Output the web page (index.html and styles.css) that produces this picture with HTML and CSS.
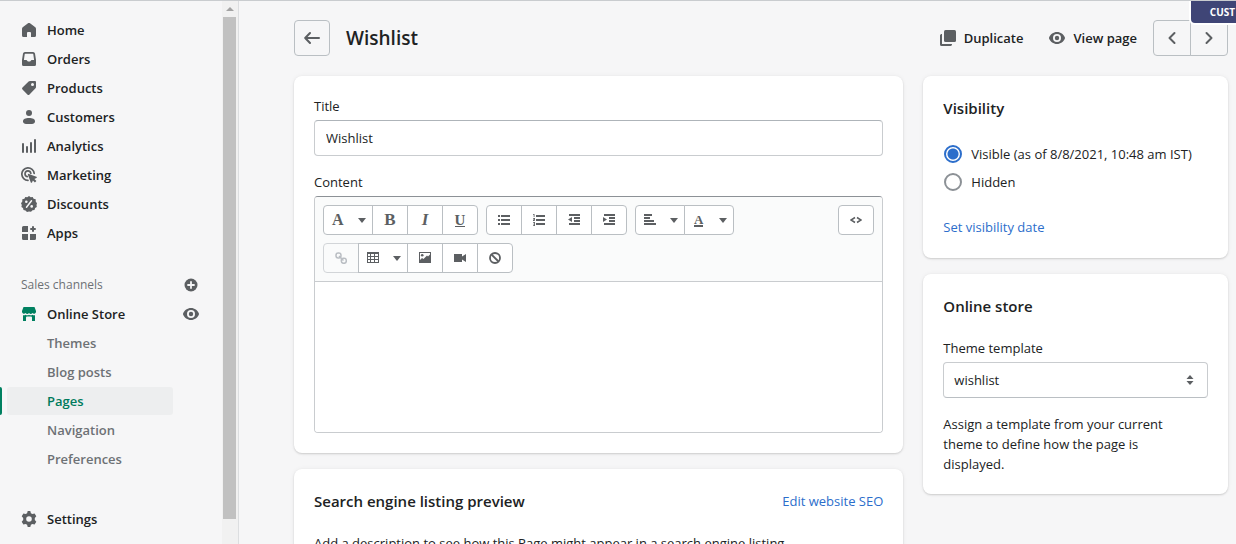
FILE: index.html
```html
<!DOCTYPE html>
<html lang="en">
<head>
<meta charset="utf-8">
<meta name="viewport" content="width=device-width, initial-scale=1">
<title>Wishlist</title>
<link rel="stylesheet" href="styles.css">
</head>
<body>
<div class="app">
  <aside class="sidebar">
    <nav class="nav">
      <a class="nav-item" href="#"><svg class="icon" viewBox="0 0 16 16"><path d="M8 1c.4 0 .7.1 1 .3l5 3.700c.6.5 1 1 1 1.800v6.700a1.500 1.500 0 0 1-1.500 1.500H10v-4a1 1 0 0 0-1-1H7a1 1 0 0 0-1 1v4H2.500A1.500 1.500 0 0 1 1 13.500V6.800C1 6 1.400 5.500 2 5l5-3.700c.3-.2.6-.3 1-.3z"/></svg>Home</a>
      <a class="nav-item" href="#"><svg class="icon" viewBox="0 0 16 16"><path fill-rule="evenodd" d="M4 1h8a2 2 0 0 1 2 1.600l1 6.400v4.500a1.500 1.500 0 0 1-1.500 1.500h-11A1.500 1.500 0 0 1 1 13.500V9l1-6.400A2 2 0 0 1 4 1zm.3 1.800a.6.6 0 0 0-.6.500L2.900 9h2.300c.6 0 .8.4 1 .800.200.500.500.700 1 .700h1.600c.5 0 .8-.2 1-.7.200-.4.400-.8 1-.8h2.300l-.8-5.700a.6.6 0 0 0-.6-.5z"/></svg>Orders</a>
      <a class="nav-item" href="#"><svg class="icon" viewBox="0 0 16 16"><path fill-rule="evenodd" d="M9 1h5a1 1 0 0 1 1 1v5c0 .5-.2 1-.5 1.300l-6 6.200a1.500 1.500 0 0 1-2.100 0L1.500 9.600a1.500 1.500 0 0 1 0-2.100l6.100-6C8 1.200 8.500 1 9 1zm2.500 5a1.500 1.500 0 1 0 0-3 1.500 1.500 0 0 0 0 3z"/></svg>Products</a>
      <a class="nav-item" href="#"><svg class="icon" viewBox="0 0 16 16"><circle cx="8" cy="4" r="3"/><path d="M2 12.200C2 10 4.500 9 8 9s6 1 6 3.200C14 14 12.500 15 11 15H5c-1.500 0-3-1-3-2.800z"/></svg>Customers</a>
      <a class="nav-item" href="#"><svg class="icon" viewBox="0 0 16 16"><rect x="1" y="5" width="2" height="10" rx="1"/><rect x="5" y="8" width="2" height="7" rx="1"/><rect x="9" y="4" width="2" height="11" rx="1"/><rect x="13" y="1" width="2" height="14" rx="1"/></svg>Analytics</a>
      <a class="nav-item" href="#"><svg class="icon" viewBox="0 0 16 16"><path fill="none" stroke="currentColor" stroke-width="1.700" stroke-linecap="round" d="M7 13.300A6.200 6.200 0 1 1 13.200 6.500M6.300 9.600A2.900 2.900 0 1 1 9.800 6.300"/><path d="M7.200 6.700l8.200 3c.7.300.7 1 0 1.300l-2 .9 2 2-1.500 1.500-2-2-.9 2c-.3.600-1 .6-1.200 0l-3-8z"/></svg>Marketing</a>
      <a class="nav-item" href="#"><svg class="icon" viewBox="0 0 16 16"><path d="M8 0l1.700 1.200 2-.3.900 1.900 2.100.5v2.200L16 7.200 15.500 9l.3 2-1.700 1.100-.6 2-2 .2L10 15.700 8 15.400l-2 .5-1.500-1.500-2-.3-.5-2L.4 10.900.8 9 0 7.200l1.300-1.700V3.300l2.100-.5.900-1.900 2 .3z"/><path stroke="#f6f6f7" stroke-width="1.500" stroke-linecap="round" d="M5.500 11.200l5-6.400"/><circle fill="#f6f6f7" cx="5.300" cy="5.700" r="1.300"/><circle fill="#f6f6f7" cx="10.700" cy="10.400" r="1.300"/></svg>Discounts</a>
      <a class="nav-item" href="#"><svg class="icon" viewBox="0 0 16 16"><path d="M2.500 1H7v6H1V2.500A1.500 1.500 0 0 1 2.500 1zM1 9h6v6H2.500A1.500 1.500 0 0 1 1 13.500zM9 9h6v4.500a1.500 1.500 0 0 1-1.500 1.500H9z"/><path stroke="currentColor" stroke-width="2" stroke-linecap="round" d="M12 2v4M10 4h4"/></svg>Apps</a>
    </nav>
    <div class="channels">
      <div class="nav-row">
        <h2 class="nav-heading">Sales channels</h2>
        <button class="nav-action" type="button" aria-label="Add sales channel"><svg class="icon" viewBox="0 0 16 16"><circle cx="8" cy="8" r="6.500"/><path stroke="#f6f6f7" stroke-width="1.800" stroke-linecap="round" d="M8 5v6M5 8h6"/></svg></button>
      </div>
      <div class="nav-row">
        <a class="nav-item" href="#"><svg class="icon icon-green" viewBox="0 0 16 16"><path d="M2.500 1h11L15 5v1a2 2 0 0 1-3.500 1 2.300 2.300 0 0 1-3.500 0 2.300 2.300 0 0 1-3.500 0A2 2 0 0 1 1 6V5z"/><path d="M2 9.200c1 .2 1.800 0 2.500-.5 1 .7 2.500.7 3.500 0 1 .7 2.500.7 3.500 0 .7.500 1.500.7 2.500.5V15h-3v-3.500a1 1 0 0 0-1-1H6a1 1 0 0 0-1 1V15H2z"/></svg>Online Store</a>
        <button class="nav-action" type="button" aria-label="View your online store"><svg class="icon" viewBox="0 0 16 16"><path fill-rule="evenodd" d="M8 2c3.700 0 6.500 2.300 7.900 5.500.1.300.1.700 0 1C14.500 11.700 11.700 14 8 14S1.500 11.700.1 8.500a1.200 1.200 0 0 1 0-1C1.500 4.300 4.300 2 8 2zm0 2a4 4 0 1 0 0 8 4 4 0 0 0 0-8z"/><circle cx="8" cy="8" r="2.200"/></svg></button>
      </div>
      <a class="sub-item" href="#">Themes</a>
      <a class="sub-item" href="#">Blog posts</a>
      <a class="sub-item sub-item-active" href="#" aria-current="page">Pages</a>
      <a class="sub-item" href="#">Navigation</a>
      <a class="sub-item" href="#">Preferences</a>
    </div>
    <a class="nav-item nav-settings" href="#"><svg class="icon" viewBox="0 0 16 16"><path fill-rule="evenodd" d="M6.700 0h2.600l.6 2.300 1.500.8 2.200-.7 1.700 2.800L13.800 7v2l1.500 1.700-1.700 2.900-2.200-.7-1.500.8-.6 2.300H6.700l-.6-2.300-1.500-.8-2.200.7-1.700-2.900L2.200 9V7L.7 5.200l1.700-2.800 2.200.7 1.500-.8zM8 5.200a2.800 2.800 0 1 0 0 5.600 2.800 2.800 0 0 0 0-5.600z"/></svg>Settings</a>
  </aside>
  <div class="scrollbar" aria-hidden="true">
    <span class="scroll-arrow"></span>
    <span class="scroll-thumb"></span>
  </div>

  <main class="main">
    <span class="badge">CUST</span>
    <header class="page-header">
      <a class="square-button" href="#" aria-label="Back to pages"><svg class="icon" viewBox="0 0 16 16"><path class="stroke" d="M15 8H1.500M6 3L1.200 8 6 13"/></svg></a>
      <h1 class="page-title">Wishlist</h1>
      <div class="page-actions">
        <button class="plain-button" type="button"><svg class="icon" viewBox="0 0 16 16"><rect x="4" width="12" height="12" rx="1.500"/><path d="M0 5.500C0 4.500 1 4 2 4v10h10c0 1-.5 2-1.500 2h-9A1.500 1.500 0 0 1 0 14.500z"/></svg>Duplicate</button>
        <button class="plain-button" type="button"><svg class="icon" viewBox="0 0 16 16"><path fill-rule="evenodd" d="M8 2c3.700 0 6.500 2.300 7.900 5.500.1.300.1.700 0 1C14.500 11.700 11.700 14 8 14S1.500 11.700.1 8.500a1.200 1.200 0 0 1 0-1C1.500 4.300 4.300 2 8 2zm0 2a4 4 0 1 0 0 8 4 4 0 0 0 0-8z"/><circle cx="8" cy="8" r="2.200"/></svg>View page</button>
      </div>
      <div class="pager">
        <button class="pager-button" type="button" aria-label="Previous"><svg class="icon" viewBox="0 0 16 16"><path class="stroke" d="M10.500 3l-5 5 5 5"/></svg></button>
        <button class="pager-button" type="button" aria-label="Next"><svg class="icon" viewBox="0 0 16 16"><path class="stroke" d="M5.500 3l5 5-5 5"/></svg></button>
      </div>
    </header>

    <div class="columns">
      <div class="column">
        <section class="card">
          <div class="field">
            <label for="title">Title</label>
            <input class="control" id="title" type="text" value="Wishlist">
          </div>
          <div class="field">
            <label for="content">Content</label>
            <div class="editor">
              <div class="toolbar">
                <div class="tool-groups">
                  <div class="tool-group">
                    <button class="tool tool-wide" type="button" aria-label="Formatting"><span class="glyph glyph-small">A</span><span class="caret"></span></button>
                    <button class="tool" type="button" aria-label="Bold"><span class="glyph">B</span></button>
                    <button class="tool" type="button" aria-label="Italic"><span class="glyph glyph-italic">I</span></button>
                    <button class="tool" type="button" aria-label="Underline"><span class="glyph glyph-underline">U</span></button>
                  </div>
                  <div class="tool-group">
                    <button class="tool" type="button" aria-label="Bulleted list"><svg class="tool-icon" viewBox="0 0 12 12"><path d="M0 1h2v2H0zM3 1h9v2H3zM0 5h2v2H0zM3 5h9v2H3zM0 9h2v2H0zM3 9h9v2H3z"/></svg></button>
                    <button class="tool" type="button" aria-label="Numbered list"><svg class="tool-icon" viewBox="0 0 12 12"><path d="M3 1h9v2H3zM3 5h9v2H3zM3 9h9v2H3zM0 0h1.500v3H.7V.8H0zM0 4h2v1.500L1 6.300h1V7H0v-.9l1.200-1.300H0zM0 8h2v4H0v-.8h1.200v-.8H.3v-.7h.9v-.9H0z"/></svg></button>
                    <button class="tool" type="button" aria-label="Outdent"><svg class="tool-icon" viewBox="0 0 12 12"><path d="M1 0h11v2H1zM6 3h6v2H6zM6 6h6v2H6zM1 9h11v2H1zM0 5.500L4 3v5z"/></svg></button>
                    <button class="tool" type="button" aria-label="Indent"><svg class="tool-icon" viewBox="0 0 12 12"><path d="M1 0h11v2H1zM6 3h6v2H6zM6 6h6v2H6zM1 9h11v2H1zM4 5.500L0 3v5z"/></svg></button>
                  </div>
                  <div class="tool-group">
                    <button class="tool tool-wide" type="button" aria-label="Alignment"><svg class="tool-icon" viewBox="0 0 12 12"><path d="M0 0h8v2H0zM0 3h6v2H0zM0 6h10v2H0zM0 9h12v2H0z"/></svg><span class="caret"></span></button>
                    <button class="tool tool-wide" type="button" aria-label="Color"><span class="glyph glyph-color">A</span><span class="caret"></span></button>
                  </div>
                  <div class="tool-group">
                    <button class="tool" type="button" aria-label="Insert link" disabled><svg class="tool-icon" viewBox="0 0 12 12"><g fill="none" stroke="currentColor" stroke-width="1.500"><rect x="1" y="1" width="5" height="5" rx="2.200"/><rect x="6.300" y="6.300" width="5" height="5" rx="2.200"/><path d="M4 4l4.500 4.500"/></g></svg></button>
                    <button class="tool tool-wide" type="button" aria-label="Insert table"><svg class="tool-icon" viewBox="0 0 12 12"><path fill-rule="evenodd" d="M0 0h12v11H0zM1 2v2h2V2zm3 0v2h3V2zm4 0v2h3V2zM1 5v2h2V5zm3 0v2h3V5zm4 0v2h3V5zM1 8v2h2V8zm3 0v2h3V8zm4 0v2h3V8z"/></svg><span class="caret"></span></button>
                    <button class="tool" type="button" aria-label="Insert image"><svg class="tool-icon" viewBox="0 0 12 12"><path fill-rule="evenodd" d="M0 0h12v11H0zM1 1v7l2-2 1.500 1L8 3.500l1 1 2-2V1z"/><circle cx="3.200" cy="3.300" r="1.300"/></svg></button>
                    <button class="tool" type="button" aria-label="Insert video"><svg class="tool-icon" viewBox="0 0 12 12"><path d="M0 2h8v2.500L12 2v8L8 7.500V10H0z"/></svg></button>
                    <button class="tool" type="button" aria-label="Clear formatting"><svg class="tool-icon" viewBox="0 0 12 12"><g fill="none" stroke="currentColor" stroke-width="1.800"><circle cx="6" cy="6" r="5"/><path d="M2.500 2.500l7 7"/></g></svg></button>
                  </div>
                </div>
                <button class="tool" type="button" aria-label="Show HTML"><svg class="tool-icon" viewBox="0 0 12 12"><path fill="none" stroke="currentColor" stroke-width="1.500" d="M5 3.500L1 6l4 2.500M7 3.500L11 6 7 8.500"/></svg></button>
              </div>
              <textarea class="editor-body" id="content"></textarea>
            </div>
          </div>
        </section>
        <section class="card card-seo">
          <div class="card-head">
            <h2 class="card-title">Search engine listing preview</h2>
            <a class="link" href="#">Edit website SEO</a>
          </div>
          <p class="text">Add a description to see how this Page might appear in a search engine listing</p>
        </section>
      </div>

      <div class="column">
        <section class="card card-visibility">
          <h2 class="card-title">Visibility</h2>
          <div class="choices">
            <label class="choice"><input class="radio" type="radio" name="visibility" checked>Visible (as of 8/8/2021, 10:48 am IST)</label>
            <label class="choice"><input class="radio" type="radio" name="visibility">Hidden</label>
          </div>
          <a class="link" href="#">Set visibility date</a>
        </section>
        <section class="card card-template">
          <h2 class="card-title">Online store</h2>
          <div class="field">
            <label for="template">Theme template</label>
            <div class="select-wrap">
              <select class="control" id="template"><option>wishlist</option></select>
              <svg class="select-icon" viewBox="0 0 8 10" aria-hidden="true"><path d="M4 0l3.500 4h-7zM4 10L.5 6h7z"/></svg>
            </div>
          </div>
          <p class="text">Assign a template from your current theme to define how the page is displayed.</p>
        </section>
      </div>
    </div>
  </main>
</div>
</body>
</html>
```
FILE: styles.css
```css
* {
  box-sizing: border-box;
}

body {
  margin: 0;
  background: #f6f6f7;
  color: #202223;
  font: 400 13px/20px "Open Sans", "Noto Sans", sans-serif;
}

h1, h2, p {
  margin: 0;
}

a {
  color: inherit;
  text-decoration: none;
}

button, input, select, textarea {
  margin: 0;
  font: inherit;
  color: inherit;
}

button {
  padding: 0;
  border: 0;
  background: none;
  cursor: pointer;
}

.app {
  display: grid;
  grid-template-columns: 222px 17px minmax(0, 1fr);
  height: 100vh;
  border-top: 1px solid #c9cccf;
  overflow: hidden;
}

.icon {
  flex: none;
  display: block;
  width: 16px;
  height: 16px;
  color: #5c5f62;
  fill: currentColor;
}

.icon-green {
  color: #008060;
}

.stroke {
  fill: none;
  stroke: currentColor;
  stroke-width: 2;
  stroke-linecap: round;
  stroke-linejoin: round;
}

/* Sidebar */

.sidebar {
  display: flex;
  flex-direction: column;
  gap: 24px;
  padding: 15px 0 11px;
}

.nav, .channels {
  display: flex;
  flex-direction: column;
  gap: 1px;
}

.nav-item {
  display: flex;
  align-items: center;
  gap: 10px;
  height: 28px;
  padding-left: 21px;
  font-weight: 600;
}

.nav-row {
  display: flex;
  align-items: center;
  justify-content: space-between;
  height: 28px;
  padding-right: 23px;
}

.nav-heading {
  padding-left: 21px;
  color: #6d7175;
  font-size: 12px;
  font-weight: 400;
}

.sub-item {
  height: 28px;
  margin: 0 49px 0 7px;
  padding-left: 40px;
  border-radius: 3px;
  color: #6d7175;
  font-weight: 600;
  line-height: 28px;
}

.sub-item-active {
  position: relative;
  background: #edeeef;
  color: #007b5c;
}

.sub-item-active::before {
  content: "";
  position: absolute;
  top: 0;
  bottom: 0;
  left: -7px;
  width: 2px;
  border-radius: 0 3px 3px 0;
  background: #008060;
}

.nav-settings {
  margin-top: auto;
}

.scrollbar {
  display: flex;
  flex-direction: column;
  align-items: center;
  gap: 6px;
  padding: 6px 1px 25px 0;
  border-right: 1px solid #dcdee0;
  background: #f1f1f1;
}

.scroll-arrow {
  border: 4px solid transparent;
  border-top-width: 0;
  border-bottom-color: #a3a3a3;
}

.scroll-thumb {
  flex: 1;
  width: 13px;
  background: #c1c1c1;
}

/* Page */

.main {
  position: relative;
  padding: 19px 8px 0 55px;
  overflow: hidden;
}

.badge {
  position: absolute;
  top: 0;
  right: 0;
  padding: 0 1px 0 19px;
  border-bottom-left-radius: 4px;
  background: #3f4576;
  box-shadow: 0 0 0 2px #ffffff;
  color: #ffffff;
  font-size: 10px;
  font-weight: 700;
  line-height: 22px;
}

.page-header {
  display: flex;
  align-items: center;
  gap: 16px;
  margin-bottom: 20px;
}

.square-button {
  display: grid;
  place-items: center;
  width: 36px;
  height: 36px;
  border: 1px solid #babfc3;
  border-radius: 4px;
}

.page-title {
  flex: 1;
  font-size: 19px;
  font-weight: 600;
  line-height: 28px;
}

.page-actions {
  display: flex;
  gap: 26px;
}

.plain-button {
  display: flex;
  align-items: center;
  gap: 8px;
  font-weight: 600;
}

.pager {
  display: flex;
}

.pager-button {
  display: grid;
  place-items: center;
  width: 38px;
  height: 36px;
  border: 1px solid #babfc3;
  border-radius: 4px 0 0 4px;
}

.pager-button + .pager-button {
  margin-left: -1px;
  border-radius: 0 4px 4px 0;
}

.columns {
  display: grid;
  grid-template-columns: minmax(0, 2fr) minmax(0, 1fr);
  align-items: start;
  gap: 20px;
}

.column {
  display: flex;
  flex-direction: column;
  gap: 16px;
}

.card {
  display: flex;
  flex-direction: column;
  gap: 16px;
  padding: 20px;
  border-radius: 8px;
  background: #ffffff;
  box-shadow: 0 0 5px rgba(23, 24, 24, 0.05), 0 1px 2px rgba(0, 0, 0, 0.15);
}

.card-head {
  display: flex;
  align-items: center;
  justify-content: space-between;
}

.card-title {
  font-size: 15px;
  font-weight: 600;
  line-height: 24px;
}

.card-seo, .card-template .card-title {
  gap: 20px;
}

.card-template .card-title {
  margin-bottom: 4px;
}

.card-template .text {
  padding-right: 8px;
}

.link {
  align-self: flex-start;
  color: #2c6ecb;
}

.card-head .link {
  align-self: center;
}

.field {
  display: flex;
  flex-direction: column;
  gap: 4px;
}

.control {
  width: 100%;
  height: 36px;
  padding: 0 11px;
  border: 1px solid #c9cccf;
  border-top-color: #aeb4b9;
  border-radius: 4px;
  background: #ffffff;
}

.select-wrap {
  position: relative;
}

select.control {
  display: block;
  appearance: none;
  padding: 0 10px;
  border-color: #c9cccf;
  border-bottom-color: #babfc3;
}

.select-icon {
  position: absolute;
  top: 13px;
  right: 14px;
  width: 8px;
  height: 10px;
  fill: #5c5f62;
  pointer-events: none;
}

.card-visibility {
  gap: 24px;
  padding-bottom: 21px;
}

.choices {
  display: flex;
  flex-direction: column;
  gap: 8px;
  padding: 0 0 1px 1px;
}

.choice {
  display: flex;
  align-items: center;
  gap: 9px;
  white-space: nowrap;
}

.radio {
  flex: none;
  appearance: none;
  width: 18px;
  height: 18px;
  border: 2px solid #8c9196;
  border-radius: 50%;
  background: #ffffff;
}

.radio:checked {
  border-color: #2c6ecb;
  background: radial-gradient(circle, #2c6ecb 5px, #ffffff 6px);
}

/* Rich text editor */

.editor {
  border: 1px solid #c9cccf;
  border-top-color: #8c9196;
  border-radius: 4px;
  overflow: hidden;
}

.toolbar {
  display: flex;
  align-items: flex-start;
  padding: 8px;
  border-bottom: 1px solid #c9cccf;
  background: #fafbfb;
}

.tool-groups {
  flex: 1;
  display: flex;
  flex-wrap: wrap;
  gap: 8px;
}

.tool-group {
  display: flex;
}

.tool {
  display: flex;
  align-items: center;
  justify-content: center;
  width: 36px;
  height: 30px;
  border: 1px solid #babfc3;
  border-radius: 4px;
  background: #ffffff;
  color: #5c5f62;
}

.tool-group .tool {
  border-radius: 0;
}

.tool-group .tool + .tool {
  margin-left: -1px;
}

.tool-group .tool:first-child {
  border-radius: 4px 0 0 4px;
}

.tool-group .tool:last-child {
  border-radius: 0 4px 4px 0;
}

.tool:disabled {
  border-color: #d2d5d8;
  background: #fafbfb;
  color: #babec3;
}

.tool-wide {
  justify-content: space-between;
  width: 50px;
  padding: 0 6px 0 8px;
}

.tool-icon {
  display: block;
  width: 12px;
  height: 12px;
  fill: currentColor;
}

.caret {
  border: 4px solid transparent;
  border-top: 5px solid #5c5f62;
  border-bottom-width: 0;
}

.glyph {
  font: 700 17px/18px "Liberation Serif", serif;
}

.glyph-small {
  font-size: 16px;
}

.glyph-italic {
  font-style: italic;
}

.glyph-underline {
  border-bottom: 1px solid #5c5f62;
  font-size: 15px;
  line-height: 12px;
}

.glyph-color {
  margin-left: 1px;
  border-bottom: 2px solid #5c5f62;
  font-size: 13px;
  line-height: 11px;
}

.editor-body {
  display: block;
  width: 100%;
  height: 150px;
  padding: 12px;
  border: 0;
  background: #ffffff;
  resize: none;
}
```
